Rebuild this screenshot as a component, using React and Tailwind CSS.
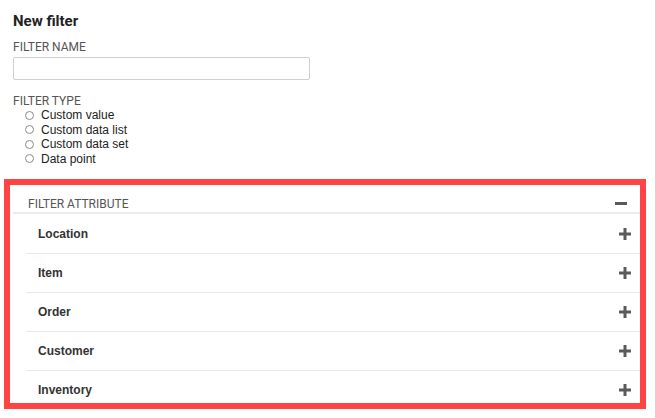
import React from 'react';

const filterTypes = ['Custom value', 'Custom data list', 'Custom data set', 'Data point'];
const attributes = ['Location', 'Item', 'Order', 'Customer', 'Inventory'];

const PlusIcon = () => (
  <svg width="12" height="12" viewBox="0 0 12 12" className="block">
    <path d="M4.5 0h3v4.5H12v3H7.5V12h-3V7.5H0v-3h4.5z" fill="#5a5a5a" />
  </svg>
);

const MinusIcon = () => (
  <svg width="12" height="3" viewBox="0 0 12 3" className="block">
    <rect x="0" y="0" width="12" height="3" fill="#5a5a5a" />
  </svg>
);

const App = () => {
  return (
    <div className="w-[655px] h-[418px] bg-white overflow-hidden">
      {/* Form */}
      <div className="pl-[13px] pt-[12px]">
        <h2 className="text-[15px] leading-[18px] font-bold text-[#222] font-['Roboto',sans-serif]">New filter</h2>
        <div className="mt-[10px] text-[12px] leading-[14px] text-[#555] font-['Roboto',sans-serif]">FILTER NAME</div>
        <input type="text" className="mt-[3px] block w-[297px] h-[23px] border border-[#cfcfcf] rounded-[2px] outline-none" />
        <div className="mt-[14px] text-[12px] leading-[14px] text-[#555] font-['Roboto',sans-serif]">FILTER TYPE</div>
        <div className="pl-[12px] font-['Liberation_Sans',Arial,sans-serif] text-[12px] text-[#222]">
          {filterTypes.map((t) => (
            <label key={t} className="flex items-center h-[14.5px] gap-[7px]">
              <span className="w-[9px] h-[9px] rounded-full border border-[#8a8a8a] bg-white" />
              <span>{t}</span>
            </label>
          ))}
        </div>
      </div>

      {/* Filter attribute panel */}
      <div className="mt-[13px] ml-[4px] w-[642px] h-[230px] border-[6px] border-[#ff4444] overflow-hidden">
        <div className="pl-[3px]">
          <div className="flex items-center justify-between h-[29px] pt-[10px] pl-[15px] pr-[13px] border-b-2 border-[#ececec]">
            <span className="text-[12px] text-[#555] font-['Roboto',sans-serif]">FILTER ATTRIBUTE</span>
            <MinusIcon />
          </div>
          <div className="ml-[13px]">
            {attributes.map((a, i) => (
              <div
                key={a}
                className={`flex items-center justify-between h-[39px] pl-[12px] pr-[9px] ${i > 0 ? 'border-t border-[#e8e8e8]' : ''}`}
              >
                <span className="text-[12px] font-bold text-[#333] font-['Liberation_Sans',Arial,sans-serif]">{a}</span>
                <PlusIcon />
              </div>
            ))}
          </div>
        </div>
      </div>
    </div>
  );
};

export default App;
